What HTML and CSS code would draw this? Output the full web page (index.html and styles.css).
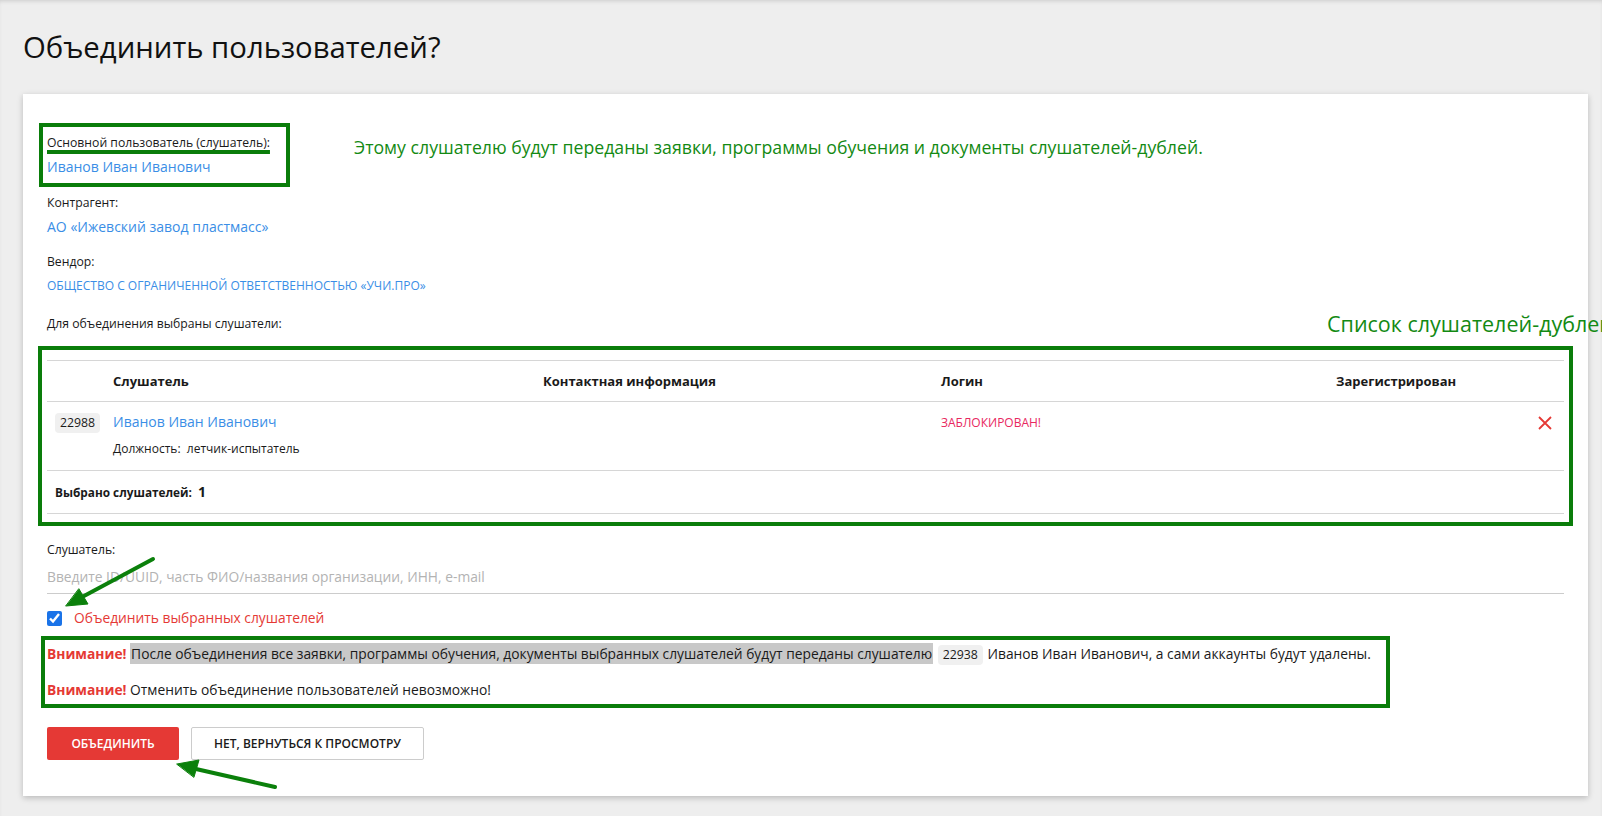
FILE: index.html
```
<!DOCTYPE html>
<html lang="ru">
<head>
    <meta charset="UTF-8">
    <meta name="viewport" content="width=device-width, initial-scale=1.0">
    <title>Объединить пользователей?</title>
    <link rel="stylesheet" href="styles.css">
</head>
<body>
    <div class="page">
        <h1 class="page-title">Объединить пользователей?</h1>

        <div class="card">
            <div class="main-row">
                <div class="mark-box main-user">
                    <div class="label underlined">Основной пользователь (слушатель):</div>
                    <a class="link" href="#">Иванов Иван Иванович</a>
                </div>
                <p class="note note-main">Этому слушателю будут переданы заявки, программы обучения и документы слушателей-дублей.</p>
            </div>

            <div class="field">
                <div class="label">Контрагент:</div>
                <a class="link" href="#">АО «Ижевский завод пластмасс»</a>
            </div>
            <div class="field">
                <div class="label">Вендор:</div>
                <a class="link link-small" href="#">ОБЩЕСТВО С ОГРАНИЧЕННОЙ ОТВЕТСТВЕННОСТЬЮ «УЧИ.ПРО»</a>
            </div>

            <div class="label selected-title">
                Для объединения выбраны слушатели:
                <span class="note note-side">Список слушателей-дублей</span>
            </div>

            <div class="mark-box dup-box">
                <div class="users-table">
                    <div class="row row-head">
                        <div class="cell"></div>
                        <div class="cell">Слушатель</div>
                        <div class="cell">Контактная информация</div>
                        <div class="cell">Логин</div>
                        <div class="cell">Зарегистрирован</div>
                        <div class="cell"></div>
                    </div>
                    <div class="row row-user">
                        <div class="cell"><span class="badge">22988</span></div>
                        <div class="cell">
                            <a class="link" href="#">Иванов Иван Иванович</a>
                            <div class="position">Должность:&nbsp; летчик-испытатель</div>
                        </div>
                        <div class="cell"></div>
                        <div class="cell"><span class="blocked">ЗАБЛОКИРОВАН!</span></div>
                        <div class="cell"></div>
                        <div class="cell cell-remove">
                            <svg class="remove-icon" width="16" height="16" viewBox="0 0 16 16">
                                <path d="M2 2 L14 14 M14 2 L2 14" stroke="#e53935" stroke-width="1.8" fill="none"/>
                            </svg>
                        </div>
                    </div>
                    <div class="row-foot">Выбрано слушателей:&nbsp; <span class="count">1</span></div>
                </div>
            </div>

            <div class="label search-label">Слушатель:</div>
            <input class="search-input" type="text" placeholder="Введите ID/UUID, часть ФИО/названия организации, ИНН, e-mail">

            <label class="merge-check">
                <input type="checkbox" checked>
                <span>Объединить выбранных слушателей</span>
            </label>

            <div class="mark-box warn-box">
                <p class="warn"><b>Внимание!</b> <span class="highlight">После объединения все заявки, программы обучения, документы выбранных слушателей будут переданы слушателю</span> <span class="badge">22938</span> Иванов Иван Иванович, а сами аккаунты будут удалены.</p>
                <p class="warn"><b>Внимание!</b> Отменить объединение пользователей невозможно!</p>
            </div>

            <div class="actions">
                <button class="btn btn-danger">Объединить</button>
                <button class="btn btn-light">Нет, вернуться к просмотру</button>
            </div>
        </div>

        <svg class="arrows" width="1602" height="816" viewBox="0 0 1602 816">
            <g stroke="#0b800b" stroke-width="4" stroke-linecap="round" fill="#0b800b">
                <line x1="153" y1="559" x2="84" y2="596"/>
                <polygon points="66,606 88,604 79,589" stroke-width="1"/>
                <line x1="275" y1="787" x2="196" y2="769"/>
                <polygon points="177,764 199,760 194,777" stroke-width="1"/>
            </g>
        </svg>
    </div>
</body>
</html>
```

FILE: styles.css
```
:root {
    --green: #0a7d0a;
    --green-text: #138a13;
    --blue: #3a8ee6;
    --red: #e53935;
    --text: #1a1a1a;
    --line: #d6d6d6;
}

* {
    box-sizing: border-box;
    margin: 0;
    padding: 0;
}

html,
body {
    overflow: hidden;
}

body {
    font-family: 'Open Sans', 'Noto Sans', sans-serif;
    font-size: 13px;
    line-height: 20px;
    color: var(--text);
    background-color: #eeeeee;
}

.page {
    position: relative;
    min-height: 816px;
    padding: 29px 14px 0 23px;
    box-shadow: inset 0 3px 4px -2px rgba(0, 0, 0, 0.15);
}

.page-title {
    font-size: 29.3px;
    font-weight: 400;
    line-height: 36px;
    color: #111;
}

.card {
    margin-top: 29px;
    padding: 29px 24px 36px;
    background-color: white;
    box-shadow: 0 2px 6px rgba(0, 0, 0, 0.22);
}

.label {
    font-size: 12.2px;
    color: var(--text);
    white-space: nowrap;
}

.link {
    display: block;
    font-size: 14px;
    color: var(--blue);
    text-decoration: none;
}

.link-small {
    font-size: 12px;
}

.mark-box {
    border: 4px solid var(--green);
}

.note {
    color: var(--green-text);
    white-space: nowrap;
}

/* main user */
.main-row {
    display: flex;
    align-items: flex-start;
}

.main-user {
    flex-shrink: 0;
    width: 251px;
    margin-left: -8px;
    padding: 6px 4px;
}

.underlined {
    margin-bottom: 4px;
    text-decoration: underline;
    text-decoration-color: var(--green);
    text-decoration-thickness: 4px;
    text-underline-offset: 3px;
    text-decoration-skip-ink: none;
}

.note-main {
    margin: 12px 0 0 64px;
    font-size: 17.7px;
    line-height: 24px;
}

.field {
    margin-top: 6px;
}

.field + .field {
    margin-top: 15px;
}

.field .label {
    margin-bottom: 4px;
}

.selected-title {
    position: relative;
    margin-top: 18px;
}

.note-side {
    position: absolute;
    left: 1280px;
    top: -3px;
    font-size: 21.5px;
    line-height: 26px;
}

/* duplicates table */
.dup-box {
    margin: 12px -9px 0;
    padding: 10px 5px 8px;
}

.users-table {
    border-top: 1px solid var(--line);
}

.row {
    display: grid;
    grid-template-columns: 58px 430px 398px 395px 1fr 44px;
    border-bottom: 1px solid var(--line);
}

.cell {
    padding: 0 8px;
}

.row-head {
    height: 41px;
    align-items: center;
    font-weight: 700;
}

.row-user {
    height: 69px;
    padding-top: 10px;
}

.badge {
    display: inline-block;
    padding: 0 5px;
    font-size: 12.3px;
    line-height: 20px;
    background-color: #f0f0f0;
    border-radius: 4px;
    color: var(--text);
}

.row-user .badge {
    margin-top: 1px;
}

.position {
    margin-top: 7px;
    font-size: 12px;
}

.blocked {
    font-size: 12px;
    color: #e8285f;
}

.cell-remove {
    display: flex;
    justify-content: flex-end;
    align-items: flex-start;
    padding: 3px 11px 0 0;
}

.row-foot {
    padding: 11px 8px;
    font-size: 11.8px;
    line-height: 20px;
    font-weight: 700;
    border-bottom: 1px solid var(--line);
}

.count {
    font-size: 14px;
}

/* search */
.search-label {
    margin-top: 14px;
}

.search-input {
    display: block;
    width: 100%;
    margin-top: 3px;
    padding: 4px 0 6px;
    border: none;
    border-bottom: 1px solid #cccccc;
    font-family: inherit;
    font-size: 13.8px;
    line-height: 20px;
    outline: none;
}

.search-input::placeholder {
    color: #b3b3b3;
}

.merge-check {
    display: flex;
    align-items: center;
    gap: 12px;
    margin-top: 14px;
    font-size: 13.8px;
    color: var(--red);
}

.merge-check input {
    width: 15px;
    height: 15px;
    margin: 0;
    accent-color: #1a73e8;
}

/* warning */
.warn-box {
    width: 1349px;
    margin: 8px 0 0 -6px;
    padding: 4px 2px;
}

.warn {
    font-size: 13.8px;
    line-height: 20px;
    white-space: nowrap;
}

.warn + .warn {
    margin-top: 15px;
}

.warn b {
    color: var(--red);
}

.highlight {
    background-color: #c8c8c8;
    padding: 1px 1px;
}

.warn .badge {
    margin: 0 1px;
}

/* buttons */
.actions {
    display: flex;
    gap: 12px;
    margin-top: 19px;
}

.btn {
    height: 33px;
    font-family: inherit;
    font-size: 12px;
    font-weight: 600;
    text-transform: uppercase;
    border-radius: 2px;
    cursor: pointer;
}

.btn-danger {
    width: 132px;
    color: white;
    background-color: var(--red);
    border: none;
}

.btn-light {
    width: 233px;
    color: var(--text);
    background-color: white;
    border: 1px solid #cccccc;
}

.arrows {
    position: absolute;
    top: 0;
    left: 0;
    pointer-events: none;
}
```
